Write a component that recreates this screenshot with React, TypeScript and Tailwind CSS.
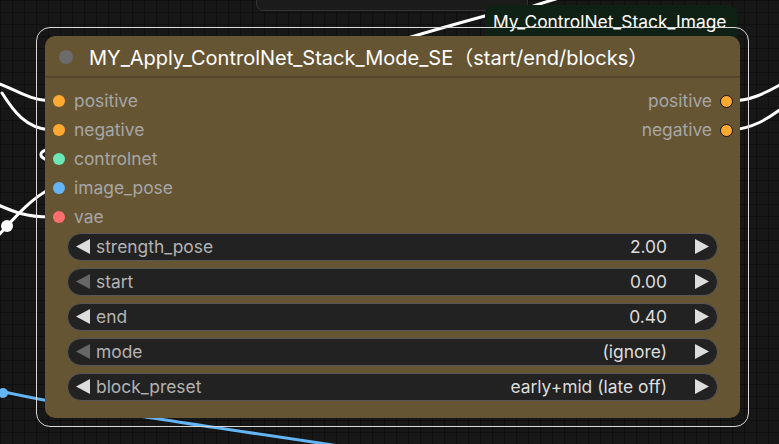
import React from "react";

const inputs = [
  { name: "positive", color: "#ffa931" },
  { name: "negative", color: "#ffa931" },
  { name: "controlnet", color: "#6ee7b7" },
  { name: "image_pose", color: "#64b5f6" },
  { name: "vae", color: "#ff6e6e" },
];

const outputs = ["positive", "negative"];

const widgets = [
  { name: "strength_pose", value: "2.00", canDec: true },
  { name: "start", value: "0.00", canDec: false },
  { name: "end", value: "0.40", canDec: true },
  { name: "mode", value: "(ignore)", canDec: false },
  { name: "block_preset", value: "early+mid (late off)", canDec: true },
];

const Arrow = ({ dir, dim }: { dir: "left" | "right"; dim?: boolean }) => (
  <svg width="14" height="15" viewBox="0 0 14 15" className="shrink-0">
    <polygon
      points={dir === "left" ? "14,0 14,15 0,7.5" : "0,0 0,15 14,7.5"}
      fill={dim ? "#666666" : "#dddddd"}
    />
  </svg>
);

const Wires = () => (
  <svg
    width="779"
    height="444"
    viewBox="0 0 779 444"
    className="absolute left-0 top-0"
    fill="none"
  >
    <g stroke="#ffffff" strokeWidth="3" strokeLinecap="round">
      <path d="M -6 82 C 14 88, 28 100, 50 101" />
      <path d="M 2 93 C 14 112, 26 128, 50 130" />
      <path d="M 48 149 C 39 152, 38 157, 48 160" />
      <path d="M 50 189 C 32 198, 18 214, -4 238" />
      <path d="M -4 204 C 14 212, 26 217, 50 217" />
      <path d="M 730 101 C 750 101, 764 94, 785 82" />
      <path d="M 730 130 C 752 129, 768 119, 785 106" />
      <path d="M 380 46 C 415 36, 450 25, 500 12" />
      <path d="M 512 14 C 528 7, 545 2, 566 -4" />
    </g>
    <circle cx="7" cy="226" r="6" fill="#ffffff" />
    <path
      d="M 0 391 C 60 405, 150 418, 380 452"
      stroke="#64b5f6"
      strokeWidth="3"
    />
    <circle cx="3" cy="393" r="5" fill="#64b5f6" />
  </svg>
);

export default function App() {
  return (
    <div
      className="relative h-[444px] w-[779px] overflow-hidden bg-[#171717] bg-[linear-gradient(#0f0f0f_1px,transparent_1px),linear-gradient(90deg,#0f0f0f_1px,transparent_1px)] bg-[size:12px_12px]"
      style={{ fontFamily: "Inter, 'Noto Sans CJK SC', sans-serif" }}
    >
      {/* node above, bottom edge only */}
      <div className="absolute left-[256px] top-[-30px] h-[41px] w-[272px] rounded-b-[7px] border border-[#333333] bg-[#1b1b1b]" />

      <Wires />

      {/* group / badge label */}
      <div className="absolute left-[485px] top-[5px] flex h-[34px] w-[252px] items-start rounded-t-[9px] bg-[#0f2015] pl-[8px] pt-[5px] text-[17.4px] leading-[24px] text-white">
        My_ControlNet_Stack_Image
      </div>

      {/* selection outline */}
      <div className="absolute left-[36px] top-[27px] h-[400px] w-[713px] rounded-[14px] border-[1.5px] border-[#d8d8d8]" />

      {/* node */}
      <div className="absolute left-[45px] top-[36px] flex h-[382px] w-[695px] flex-col rounded-[10px] bg-[#665533]">
        <div className="flex h-[42px] items-center border-b-2 border-[#55472b] pl-[14px]">
          <div className="mt-[2px] h-[14px] w-[14px] rounded-full bg-[#6b6b6b]" />
          <span className="ml-[16px] mt-[4px] text-[20px] leading-[24px] text-white">
            MY_Apply_ControlNet_Stack_Mode_SE（start/end/blocks）
          </span>
        </div>

        <div className="flex pt-[9px]">
          <div className="flex flex-1 flex-col">
            {inputs.map((inp) => (
              <div
                key={inp.name}
                className="flex h-[28.8px] items-center pl-[8px] text-[17.4px] text-[#a6a6a6]"
              >
                <div
                  className="h-[12px] w-[12px] rounded-full"
                  style={{ backgroundColor: inp.color }}
                />
                <span className="ml-[9px]">{inp.name}</span>
              </div>
            ))}
          </div>
          <div className="flex flex-col items-end pr-[7px]">
            {outputs.map((out) => (
              <div
                key={out}
                className="flex h-[28.8px] items-center text-[17.4px] text-[#a6a6a6]"
              >
                <span className="mr-[8px]">{out}</span>
                <div className="h-[13px] w-[13px] rounded-full border border-[#111111] bg-[#ffa931]" />
              </div>
            ))}
          </div>
        </div>

        <div className="mt-[2px] flex flex-col gap-[7px] px-[22px]">
          {widgets.map((w) => (
            <div
              key={w.name}
              className="flex h-[28px] items-center rounded-full border border-[#575757] bg-[#222222] pl-[8px] pr-[8px] text-[17.4px]"
            >
              <Arrow dir="left" dim={!w.canDec} />
              <span className="ml-[6px] flex-1 text-[#b3b3b3]">{w.name}</span>
              <span className="text-[#dddddd]">{w.value}</span>
              <div className="ml-[28px]">
                <Arrow dir="right" />
              </div>
            </div>
          ))}
        </div>
      </div>
    </div>
  );
}
